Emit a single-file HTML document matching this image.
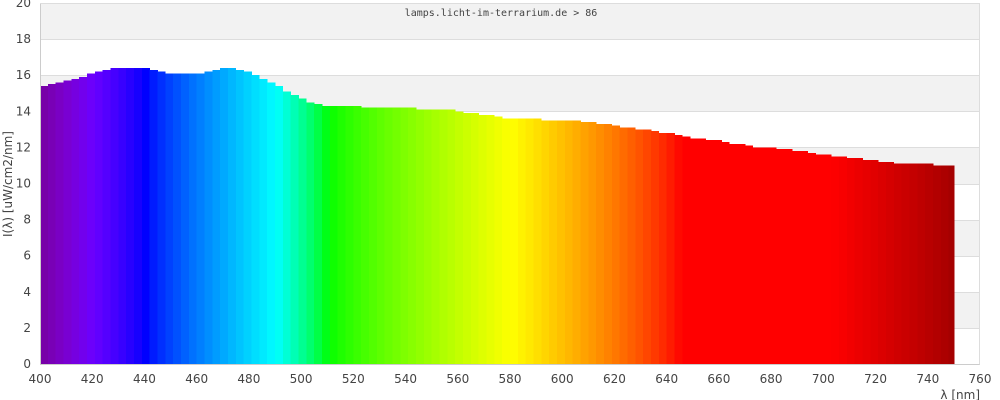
<!DOCTYPE html>
<html><head><meta charset="utf-8"><style>
html,body{margin:0;padding:0;background:#fff;width:1000px;height:400px;overflow:hidden}
svg text{font-family:"DejaVu Sans","Liberation Sans",sans-serif;font-size:12px;fill:#444}
</style></head><body>
<svg id="s" width="1000" height="400" xmlns="http://www.w3.org/2000/svg">
<g id="bg">
<rect x="40" y="3" width="940" height="36" fill="#f2f2f2"/>
<rect x="40" y="75" width="940" height="36" fill="#f2f2f2"/>
<rect x="40" y="147" width="940" height="37" fill="#f2f2f2"/>
<rect x="40" y="220" width="940" height="36" fill="#f2f2f2"/>
<rect x="40" y="292" width="940" height="36" fill="#f2f2f2"/>
</g>
<g id="grid"></g>
<g id="bars"></g>
<g id="lab"></g>
<line x1="40.5" y1="3" x2="40.5" y2="364.5" stroke="#ccc"/>
<line x1="40" y1="364.5" x2="980" y2="364.5" stroke="#ccc"/>
<line x1="979.5" y1="3" x2="979.5" y2="364.5" stroke="#ddd"/>
<line x1="40" y1="3.5" x2="980" y2="3.5" stroke="#ddd"/>
<text x="501" y="16" text-anchor="middle" style="font-family:'DejaVu Sans Mono','Liberation Mono',monospace;font-size:10px;fill:#444">lamps.licht-im-terrarium.de &gt; 86</text>
<text x="980" y="399" text-anchor="end">λ [nm]</text>
<text transform="translate(12,184) rotate(-90)" text-anchor="middle">I(λ)  [uW/cm2/nm]</text>
</svg>
<script>
var X0=40,X1=980,Y0=364,Y1=3;
function px(w){return X0+(w-400)*(X1-X0)/360}
function py(v){return Y0-v*(Y0-Y1)/20}
var ns="http://www.w3.org/2000/svg";
function el(p,t,a){var e=document.createElementNS(ns,t);for(var k in a)e.setAttribute(k,a[k]);p.appendChild(e);return e}
var grid=document.getElementById('grid'),lab=document.getElementById('lab'),bars=document.getElementById('bars');
for(var v=2;v<20;v+=2){var y=Math.round(py(v))+0.5;el(grid,'line',{x1:X0,x2:X1,y1:y,y2:y,stroke:'#ddd'});}
for(var v=0;v<=20;v+=2){var t=el(lab,'text',{x:31,y:py(v)+4,'text-anchor':'end'});t.textContent=v;}
for(var w=400;w<=760;w+=20){var t=el(lab,'text',{x:px(w),y:383,'text-anchor':'middle'});t.textContent=w;}
var P=[[400,15.3],[402,15.4],[405,15.6],[410,15.7],[415,15.9],[420,16.1],[425,16.3],[430,16.4],[440,16.4],[443,16.3],[447,16.2],[450,16.1],[460,16.1],[465,16.2],[470,16.4],[475,16.4],[478,16.2],[482,16.0],[487,15.7],[492,15.3],[497,14.9],[500,14.7],[505,14.4],[510,14.3],[520,14.3],[525,14.2],[540,14.2],[545,14.1],[555,14.1],[560,14.0],[570,13.8],[580,13.6],[600,13.5],[610,13.4],[620,13.2],[630,13.0],[640,12.8],[650,12.5],[660,12.35],[670,12.1],[680,11.95],[690,11.8],[700,11.6],[710,11.4],[720,11.25],[730,11.1],[750,11.0]];
function I(w){for(var i=0;i<P.length-1;i++){if(w>=P[i][0]&&w<=P[i+1][0]){var f=(w-P[i][0])/(P[i+1][0]-P[i][0]);return P[i][1]+f*(P[i+1][1]-P[i][1]);}}return 11;}
function col(w){var r=0,g=0,b=0;
 if(w<440){r=-(w-440)/60;b=1}else if(w<490){g=(w-440)/50;b=1}else if(w<510){g=1;b=-(w-510)/20}else if(w<580){r=(w-510)/70;g=1}else if(w<645){r=1;g=-(w-645)/65}else r=1;
 var f=1;if(w<420)f=0.25+0.75*(w-385)/35;else if(w>703)f=0.3+0.7*(780-w)/77;
 function c(x){return x==0?0:Math.round(255*Math.pow(x*f,0.8))}
 return 'rgb('+c(r)+','+c(g)+','+c(b)+')';}
for(var w=400;w<750;w+=3){var v=Math.round(I(w+1)*10)/10;var x=px(w),x2=px(Math.min(w+3,750));
 el(bars,'rect',{x:x,y:py(v),width:x2-x+0.4,height:Y0-py(v),fill:col(w+1),'shape-rendering':'crispEdges'});}
</script>
</body></html>
